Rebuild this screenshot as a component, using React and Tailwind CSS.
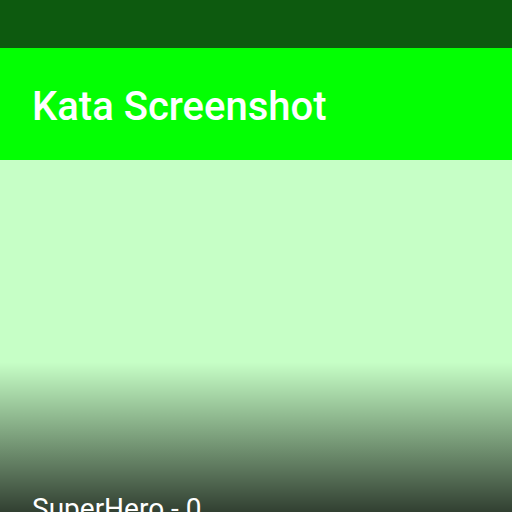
import React from "react";

function App() {
  return (
    <div className="h-[512px] w-[512px] overflow-hidden flex flex-col bg-[#c6ffc6] font-['Roboto',sans-serif]">
      <div className="h-12 shrink-0 bg-[#0d5a0f]"></div>
      <div className="h-28 shrink-0 bg-[#03ff03] flex items-center px-8 pt-[4px]">
        <h1 className="text-[40px] leading-[47px] font-medium text-white">Kata Screenshot</h1>
      </div>
      <div className="h-[202px] shrink-0"></div>
      <div className="h-[170px] shrink-0 bg-gradient-to-b from-transparent to-black/85 px-8 pt-[129px]">
        <div className="text-[28px] leading-9 text-white">SuperHero - 0</div>
      </div>
    </div>
  );
}

export default App;
